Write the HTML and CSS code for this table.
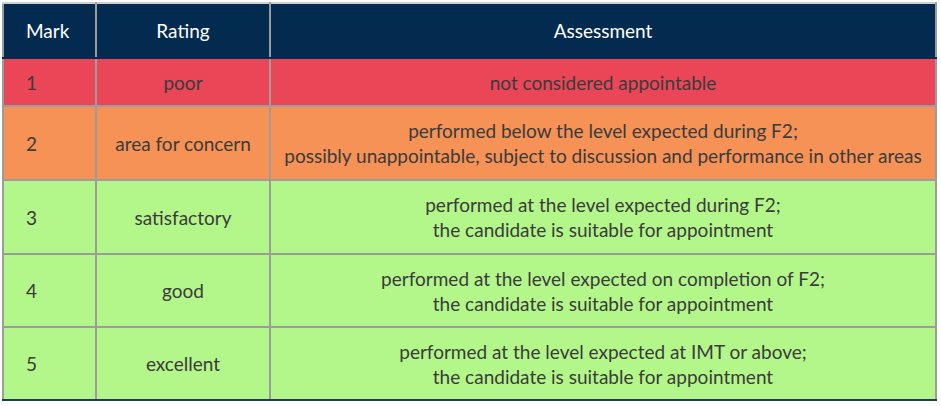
FILE: index.html
```html
<!DOCTYPE html>
<html>
<head>
<meta charset="utf-8">
<link rel="stylesheet" href="styles.css">
</head>
<body>
<div class="wrap">
<table class="marks">
  <thead>
    <tr>
      <th class="c-mark">Mark</th>
      <th class="c-rating">Rating</th>
      <th class="c-assess">Assessment</th>
    </tr>
  </thead>
  <tbody>
    <tr class="r-poor">
      <td class="c-mark">1</td>
      <td class="c-rating">poor</td>
      <td class="c-assess">not considered appointable</td>
    </tr>
    <tr class="r-concern tall">
      <td class="c-mark">2</td>
      <td class="c-rating">area for concern</td>
      <td class="c-assess">performed below the level expected during F2;<br>possibly unappointable, subject to discussion and performance in other areas</td>
    </tr>
    <tr class="r-ok tall">
      <td class="c-mark">3</td>
      <td class="c-rating">satisfactory</td>
      <td class="c-assess">performed at the level expected during F2;<br>the candidate is suitable for appointment</td>
    </tr>
    <tr class="r-ok tall2">
      <td class="c-mark">4</td>
      <td class="c-rating">good</td>
      <td class="c-assess">performed at the level expected on completion of F2;<br>the candidate is suitable for appointment</td>
    </tr>
    <tr class="r-ok tall2 last">
      <td class="c-mark">5</td>
      <td class="c-rating">excellent</td>
      <td class="c-assess">performed at the level expected at IMT or above;<br>the candidate is suitable for appointment</td>
    </tr>
  </tbody>
</table>
</div>
</body>
</html>
```

FILE: styles.css
```css
html, body {
  margin: 0;
  padding: 0;
  background: #ffffff;
}
.wrap {
  padding: 2px 4px 0 2px;
}
.marks {
  width: 935px;
  border-collapse: collapse;
  font-family: Lato, "Open Sans", sans-serif;
  font-size: 19px;
  color: #3b3b3b;
  table-layout: fixed;
}
.marks th,
.marks td {
  border: 2px solid #9c9c9c;
  padding: 0;
  vertical-align: middle;
}
.marks thead th {
  background: #032a4f;
  color: #ffffff;
  font-weight: normal;
  height: 53px;
  border-color: #9c9c9c #9c9c9c #032a4f #9c9c9c;
  border-top-color: #cfcfcf;
}
.marks .c-mark {
  width: 69px;
  text-align: left;
  padding-left: 22px;
}
.c-rating {
  width: 172px;
  text-align: center;
}
.c-assess {
  text-align: center;
  line-height: 25px;
}
.r-poor td {
  background: #ea4658;
  height: 46px;
}
.r-concern td {
  background: #f69255;
}
.r-ok td {
  background: #b3f68a;
}
.tall td {
  height: 72px;
}
.tall2 td {
  height: 71px;
}
.last td {
  border-bottom: 2px solid #1c3a5c;
}
```
